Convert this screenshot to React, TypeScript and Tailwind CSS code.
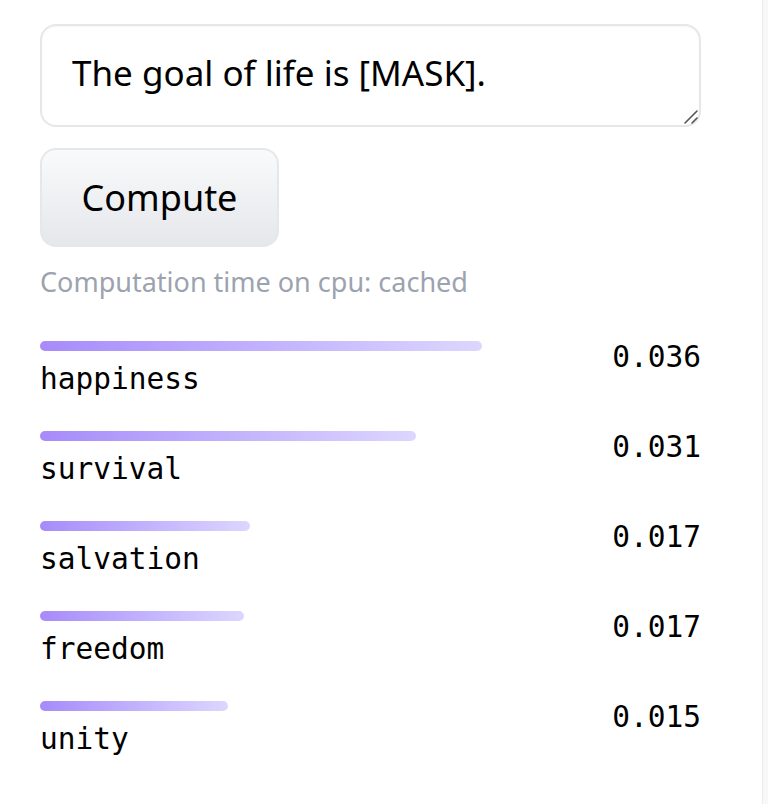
const results = [
  { label: "happiness", score: "0.036", width: 442 },
  { label: "survival", score: "0.031", width: 376 },
  { label: "salvation", score: "0.017", width: 210 },
  { label: "freedom", score: "0.017", width: 204 },
  { label: "unity", score: "0.015", width: 188 },
]

export default function App() {
  return (
    <div className="flex min-h-[804px] w-[768px] bg-white font-['Noto_Sans',sans-serif]">
      <main className="w-[762px] pl-10 pt-6">
        <div className="flex w-[661px] flex-col">
          {/* Input */}
          <div className="relative">
            <textarea
              defaultValue="The goal of life is [MASK]."
              className="block h-[103px] w-full resize-none rounded-2xl border-2 border-[#e5e7eb] bg-white px-[30px] pt-[24px] text-[35px] leading-[46px] text-black shadow-[inset_0_1px_2px_rgba(0,0,0,0.04)] outline-none"
            />
            {/* resize grip */}
            <svg
              className="pointer-events-none absolute bottom-[2px] right-[2px]"
              width="16"
              height="16"
              viewBox="0 0 16 16"
            >
              <path d="M14 2 L2 14 M14 9 L9 14" stroke="#555" strokeWidth="1.6" strokeLinecap="round" />
            </svg>
          </div>

          {/* Run button */}
          <button className="mt-[21px] h-[99px] w-[239px] rounded-2xl border-2 border-[#e5e7eb] bg-gradient-to-b from-[#f9fafb] to-[#e5e7eb] text-[36px] text-black">
            Compute
          </button>

          <p className="mt-[17px] text-[27px] leading-[36px] text-[#9ca3af]">
            Computation time on cpu: cached
          </p>

          {/* Label output */}
          <div className="mt-[41px] flex flex-col font-['DejaVu_Sans_Mono',monospace]">
            {results.map((r) => (
              <div key={r.label} className="flex h-[90px] items-start justify-between">
                <div className="flex flex-col">
                  <div
                    className="h-[10px] rounded-full bg-gradient-to-r from-[#a78bfa] to-[#ddd6fe]"
                    style={{ width: r.width }}
                  />
                  <span className="mt-[10px] text-[29.5px] leading-[36px] text-black">{r.label}</span>
                </div>
                <span className="mt-[-2px] text-[29.5px] leading-[36px] text-black">{r.score}</span>
              </div>
            ))}
          </div>
        </div>
      </main>
      <aside className="flex-1 border-l border-[#eeebee] bg-[#f9f8f9]" />
    </div>
  )
}
